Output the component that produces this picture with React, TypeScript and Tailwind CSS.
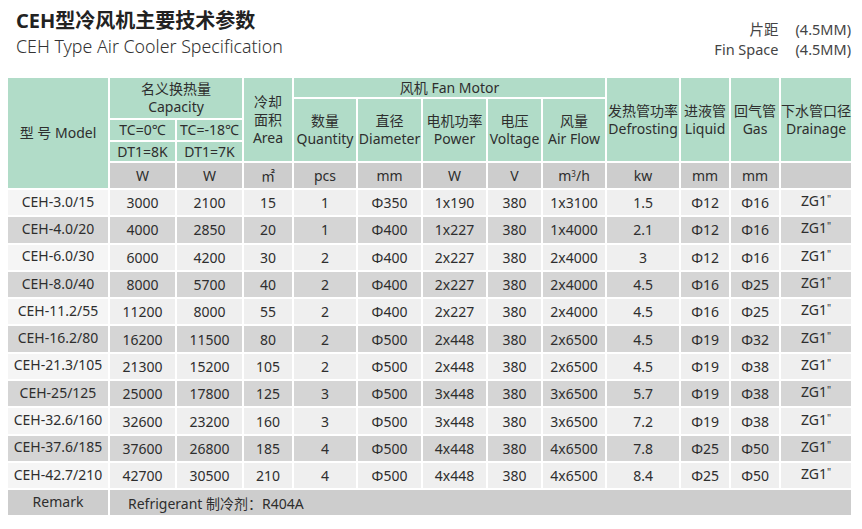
const font = { fontFamily: '"Noto Sans", "Noto Sans CJK SC", sans-serif' };

const rows = [
  ["CEH-3.0/15", "3000", "2100", "15", "1", "Φ350", "1x190", "380", "1x3100", "1.5", "Φ12", "Φ16"],
  ["CEH-4.0/20", "4000", "2850", "20", "1", "Φ400", "1x227", "380", "1x4000", "2.1", "Φ12", "Φ16"],
  ["CEH-6.0/30", "6000", "4200", "30", "2", "Φ400", "2x227", "380", "2x4000", "3", "Φ12", "Φ16"],
  ["CEH-8.0/40", "8000", "5700", "40", "2", "Φ400", "2x227", "380", "2x4000", "4.5", "Φ16", "Φ25"],
  ["CEH-11.2/55", "11200", "8000", "55", "2", "Φ400", "2x227", "380", "2x4000", "4.5", "Φ16", "Φ25"],
  ["CEH-16.2/80", "16200", "11500", "80", "2", "Φ500", "2x448", "380", "2x6500", "4.5", "Φ19", "Φ32"],
  ["CEH-21.3/105", "21300", "15200", "105", "2", "Φ500", "2x448", "380", "2x6500", "4.5", "Φ19", "Φ38"],
  ["CEH-25/125", "25000", "17800", "125", "3", "Φ500", "3x448", "380", "3x6500", "5.7", "Φ19", "Φ38"],
  ["CEH-32.6/160", "32600", "23200", "160", "3", "Φ500", "3x448", "380", "3x6500", "7.2", "Φ19", "Φ38"],
  ["CEH-37.6/185", "37600", "26800", "185", "4", "Φ500", "4x448", "380", "4x6500", "7.8", "Φ25", "Φ50"],
  ["CEH-42.7/210", "42700", "30500", "210", "4", "Φ500", "4x448", "380", "4x6500", "8.4", "Φ25", "Φ50"],
];

const widths = [102, 67, 67, 50, 64, 65, 65, 55, 64, 74, 50, 50, 72];

const th = "border-2 border-white bg-[#b1dcc8] font-normal text-center align-middle leading-[18px] p-0 whitespace-nowrap";
const unit = "border-2 border-white bg-[#cdcdcd] font-normal text-center align-middle p-0";

export default function App() {
  return (
    <div className="w-[862px] h-[529px] bg-white text-[#2e2e2e] overflow-hidden" style={font}>
      <div className="flex items-start justify-between h-[76px] pl-[16px] pr-[11px]">
        <div className="pt-[8px]">
          <div className="text-[20px] font-bold leading-[26px] text-[#222]">CEH型冷风机主要技术参数</div>
          <div className="text-[17.8px] font-light leading-[22px] text-[#333] mt-[1px]">
            CEH Type Air Cooler Specification
          </div>
        </div>
        <div className="grid grid-cols-[auto_auto] gap-x-[17px] text-[14.5px] leading-[20px] text-[#444] pt-[19px]">
          <span className="text-right">片距</span>
          <span>(4.5MM)</span>
          <span className="text-right">Fin Space</span>
          <span>(4.5MM)</span>
        </div>
      </div>
      <table className="ml-[6px] table-fixed border-collapse text-[14px]" style={{ width: 847 }}>
        <colgroup>
          {widths.map((w, i) => (
            <col key={i} style={{ width: w }} />
          ))}
        </colgroup>
        <thead>
          <tr className="h-[21px]">
            <th rowSpan={5} className={th}>型 号 Model</th>
            <th colSpan={2} rowSpan={2} className={th}>
              名义换热量
              <br />
              Capacity
            </th>
            <th rowSpan={4} className={th}>
              冷却
              <br />
              面积
              <br />
              Area
            </th>
            <th colSpan={5} className={th}>风机 Fan Motor</th>
            <th rowSpan={4} className={th}>
              发热管功率
              <br />
              Defrosting
            </th>
            <th rowSpan={4} className={th}>
              进液管
              <br />
              Liquid
            </th>
            <th rowSpan={4} className={th}>
              回气管
              <br />
              Gas
            </th>
            <th rowSpan={4} className={th}>
              下水管口径
              <br />
              Drainage
            </th>
          </tr>
          <tr className="h-[21px]">
            <th rowSpan={3} className={th}>
              数量
              <br />
              Quantity
            </th>
            <th rowSpan={3} className={th}>
              直径
              <br />
              Diameter
            </th>
            <th rowSpan={3} className={th}>
              电机功率
              <br />
              Power
            </th>
            <th rowSpan={3} className={th}>
              电压
              <br />
              Voltage
            </th>
            <th rowSpan={3} className={th}>
              风量
              <br />
              Air Flow
            </th>
          </tr>
          <tr className="h-[22px]">
            <th className={th}>TC=0℃</th>
            <th className={th}>TC=-18℃</th>
          </tr>
          <tr className="h-[21px]">
            <th className={th}>DT1=8K</th>
            <th className={th}>DT1=7K</th>
          </tr>
          <tr className="h-[27px]">
            <th className={unit}>W</th>
            <th className={unit}>W</th>
            <th className={unit}>㎡</th>
            <th className={unit}>pcs</th>
            <th className={unit}>mm</th>
            <th className={unit}>W</th>
            <th className={unit}>V</th>
            <th className={unit}>
              m<sup className="text-[8px]">3</sup>/h
            </th>
            <th className={unit}>kw</th>
            <th className={unit}>mm</th>
            <th className={unit}>mm</th>
            <th className={unit}></th>
          </tr>
        </thead>
        <tbody>
          {rows.map((r, i) => {
            const even = i % 2 === 0;
            const bg = even ? "bg-[#efefef]" : "bg-[#d5d5d5]";
            const first = even ? "bg-[#f5f5f5]" : "bg-[#d5d5d5]";
            return (
              <tr key={r[0]} className="h-[27.3px]">
                <td className={`border-2 border-white text-center p-0 pb-[3px] whitespace-nowrap ${first}`}>{r[0]}</td>
                {r.slice(1).map((c, j) => (
                  <td key={j} className={`border-2 border-white text-center p-0 ${bg}`}>
                    {c}
                  </td>
                ))}
                <td className={`border-2 border-white text-center p-0 pb-[4px] ${bg}`}>
                  ZG1<span className="relative -top-[3px] text-[10px]">"</span>
                </td>
              </tr>
            );
          })}
          <tr className="h-[27px]">
            <td className="border-2 border-white text-center bg-[#cdcdcd] p-0 pb-[3px]">Remark</td>
            <td colSpan={12} className="border-2 border-white bg-[#cdcdcd] p-0 pl-[18px] pt-[2px]">
              Refrigerant 制冷剂：R404A
            </td>
          </tr>
        </tbody>
      </table>
    </div>
  );
}
